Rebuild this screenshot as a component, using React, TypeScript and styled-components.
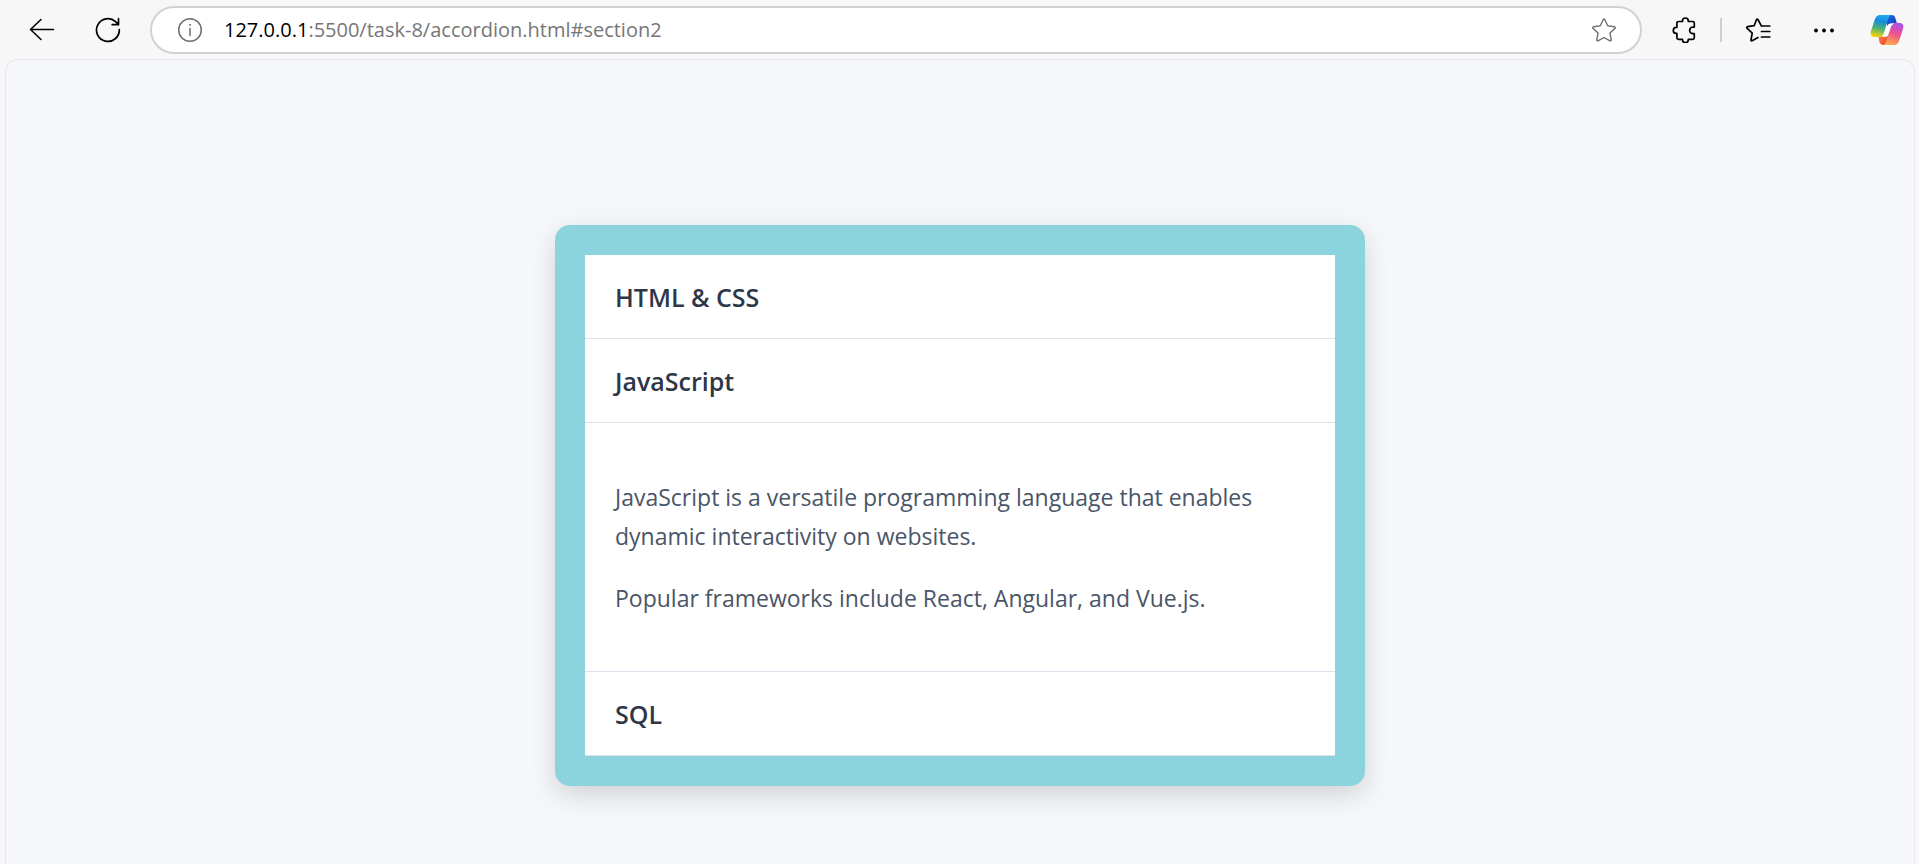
import React, { useState } from 'react';
import styled, { createGlobalStyle } from 'styled-components';

const GlobalStyle = createGlobalStyle`
  *, *::before, *::after { box-sizing: border-box; }
  body {
    margin: 0;
    background: #f7f7f7;
    font-family: 'Open Sans', 'Noto Sans', sans-serif;
  }
`;

const Window = styled.div`
  display: flex;
  flex-direction: column;
  min-height: 100vh;
`;

const Toolbar = styled.header`
  display: flex;
  align-items: center;
  padding: 6px 14px 6px 24px;
  height: 59px;
`;

const ToolButton = styled.button<{ $gap?: number }>`
  display: flex;
  align-items: center;
  justify-content: center;
  flex: none;
  width: 36px;
  height: 36px;
  padding: 0;
  margin-left: ${({ $gap = 0 }) => $gap}px;
  border: 0;
  border-radius: 6px;
  background: transparent;
  color: #000;
  cursor: pointer;
`;

const AddressBar = styled.form`
  display: flex;
  align-items: center;
  flex: 1;
  min-width: 0;
  height: 48px;
  margin-left: 24px;
  padding: 0 18px 0 20px;
  border: 2px solid #d2d2d2;
  border-radius: 24px;
  background: #fff;
  font-size: 20px;
`;

const BarButton = styled(ToolButton)`
  color: #6e6e6e;
`;

const Host = styled.label`
  margin-left: 16px;
  color: #000;
`;

const Address = styled.input`
  flex: 1;
  min-width: 0;
  padding: 0;
  border: 0;
  outline: 0;
  background: transparent;
  color: #767676;
  font: inherit;
`;

const Divider = styled.span`
  width: 2px;
  height: 24px;
  margin-left: 17px;
  background: #cfcfcf;
`;

const Viewport = styled.main`
  display: flex;
  flex: 1;
  justify-content: center;
  align-items: flex-start;
  margin: 0 4px 0 5px;
  padding: 165px 24px 0;
  border: 1px solid #e6e7e9;
  border-bottom: 0;
  border-radius: 14px 14px 0 0;
  background: #f5f7fb;
`;

const Card = styled.div`
  width: 100%;
  max-width: 810px;
  padding: 30px;
  border-radius: 15px;
  background: #8bd4dd;
  box-shadow: 0 9px 27px rgba(0, 0, 0, 0.15);
`;

const Section = styled.section`
  background: #fff;
`;

const SectionHeader = styled.a`
  display: block;
  padding: 24px 30px 23px;
  border-bottom: 1px solid #dfe2ec;
  color: #2d3748;
  font-size: 25px;
  font-weight: 600;
  line-height: 36px;
  text-decoration: none;
`;

const Panel = styled.div`
  display: flex;
  flex-direction: column;
  gap: 23px;
  padding: 55px 30px 53px;
  border-bottom: 1px solid #dfe2ec;
`;

const Paragraph = styled.p`
  margin: 0;
  color: #4a5568;
  font-size: 23px;
  line-height: 39px;
`;

const stroke = {
  fill: 'none',
  stroke: 'currentColor',
  strokeLinecap: 'round' as const,
  strokeLinejoin: 'round' as const,
};

const BackIcon = () => (
  <svg width="26" height="26" viewBox="0 0 26 26" {...stroke} strokeWidth="1.6">
    <path d="M24.5 12.5H1.5M12 2.5l-10.5 10 10.5 10" />
  </svg>
);

const ReloadIcon = () => (
  <svg width="26" height="26" viewBox="0 0 26 26" {...stroke} strokeWidth="1.7">
    <path d="M24.3 12.5A11.4 11.4 0 1 1 20.600 4.600l2.900 2.900M23.500 1.700v6h-6.300" />
  </svg>
);

const InfoIcon = () => (
  <svg width="26" height="26" viewBox="0 0 26 26" {...stroke} strokeWidth="1.5">
    <circle cx="13" cy="13" r="11.3" />
    <path d="M13 11.5v7" />
    <circle cx="13" cy="7.8" r=".6" fill="currentColor" strokeWidth=".8" />
  </svg>
);

const StarIcon = () => (
  <svg width="26" height="26" viewBox="0 0 26 26" {...stroke} strokeWidth="1.4">
    <path d="M12.3 2.500q.7-1 1.400 0l3 6.300 6.900 1q1.200.4.400 1.400l-5 4.900 1.200 6.800q0 1.200-1.200.9L13 20.500l-6 3.300q-1.200.3-1.200-.9L7 16.100l-5-4.900q-.8-1 .4-1.400l6.900-1z" />
  </svg>
);

const PuzzleIcon = () => (
  <svg width="26" height="26" viewBox="0 0 26 26" {...stroke} strokeWidth="1.7">
    <path d="M6.500 4.500h4v-.6a2.900 2.900 0 0 1 5.800 0v.6h4.400c.9 0 1.600.7 1.600 1.600v4h-1.400a2.900 2.900 0 0 0 0 6.600h1.400v4c0 .9-.7 1.600-1.600 1.600h-4.400v.4a2.900 2.900 0 0 1-5.800 0v-.4h-4c-.9 0-1.600-.7-1.600-1.600v-4.300h-.6a3 3 0 0 1 0-6h.6V6.100c0-.9.700-1.600 1.600-1.600z" />
  </svg>
);

const FavoritesIcon = () => (
  <svg width="26" height="26" viewBox="0 0 26 26" {...stroke} strokeWidth="1.7">
    <path d="M13 20.600l-5.900 3.200q-1.200.4-1.100-.8l1.200-6.900-5.200-5q-.8-1 .4-1.400l6.800-1 2.300-6.200q.7-1 1.400 0l3.300 6.200M16.500 9h8.300M16.500 14.500h8.300M16.500 20h8.300" />
  </svg>
);

const MoreIcon = () => (
  <svg width="26" height="26" viewBox="0 0 26 26" fill="currentColor">
    <circle cx="5" cy="13.5" r="1.9" />
    <circle cx="13" cy="13.5" r="1.9" />
    <circle cx="21" cy="13.5" r="1.9" />
  </svg>
);

const CopilotIcon = () => (
  <svg width="34" height="32" viewBox="0 0 34 32">
    <defs>
      <linearGradient id="cool" x1=".6" y1="0" x2=".4" y2="1">
        <stop offset="0" stopColor="#22a9f2" />
        <stop offset=".3" stopColor="#168bdc" />
        <stop offset=".62" stopColor="#4bb277" />
        <stop offset="1" stopColor="#f5d00d" />
      </linearGradient>
      <linearGradient id="navy" x1="0" y1="0" x2="1" y2="1">
        <stop offset="0" stopColor="#1769e0" />
        <stop offset="1" stopColor="#1a35b8" />
      </linearGradient>
      <linearGradient id="warm" x1=".7" y1="0" x2=".35" y2="1">
        <stop offset="0" stopColor="#a951e8" />
        <stop offset=".45" stopColor="#ec5092" />
        <stop offset="1" stopColor="#ffac4a" />
      </linearGradient>
      <linearGradient id="ember" x1="0" y1="0" x2="1" y2="1">
        <stop offset="0" stopColor="#ff8a45" />
        <stop offset="1" stopColor="#e9402d" />
      </linearGradient>
    </defs>
    <path fill="url(#navy)" d="M17 1h4.500c2.200 0 3.200 1.200 3.800 3l1.700 5.500h-5c-3 0-4 1-5 4.500z" />
    <path fill="url(#ember)" d="M8.500 22.500h4c3 0 4-1 5-4.500l2 0-3 13h-3c-2.500 0-3.500-1.500-4.200-3.500z" />
    <path fill="url(#cool)" d="M10 1h12c-2.300 0-3.200 1.800-4 4.500l-4 13c-.8 2.700-2.300 4.500-5 4.500H4.500C1 23 0 20.500 1 17L4.800 5.500C5.800 2.500 7.500 1 10 1z" />
    <path fill="url(#warm)" d="M24 31H12.500c2.300 0 3.200-1.800 4-4.500l4-13c.8-2.700 2.300-4.500 5-4.500h4c3.500 0 4.500 2.500 3.500 6l-3.800 11.500C28.200 29.500 26.500 31 24 31z" />
    <path fill="#fff" d="M21.500 9.500h3.300c-2.300.5-3.500 2-4.200 4l-2.400 7.500c-.5 1.300-1.600 1.800-3.400 1.800h-2.600c1.500-.9 2.300-2.300 2.800-4l1.900-6c.7-2.200 2-3.300 4.600-3.300z" />
  </svg>
);

const sections = [
  {
    id: 'section1',
    title: 'HTML & CSS',
    body: ['HTML gives a page its structure.', 'CSS describes how it is presented.'],
  },
  {
    id: 'section2',
    title: 'JavaScript',
    body: [
      'JavaScript is a versatile programming language that enables dynamic interactivity on websites.',
      'Popular frameworks include React, Angular, and Vue.js.',
    ],
  },
  {
    id: 'section3',
    title: 'SQL',
    body: ['SQL is used to query and manage relational databases.'],
  },
];

export default function App() {
  const [open, setOpen] = useState('section2');
  const [path, setPath] = useState(':5500/task-8/accordion.html#section2');

  return (
    <>
      <GlobalStyle />
      <Window>
        <Toolbar>
          <ToolButton aria-label="Back"><BackIcon /></ToolButton>
          <ToolButton aria-label="Refresh" $gap={30}><ReloadIcon /></ToolButton>
          <AddressBar onSubmit={(e) => e.preventDefault()}>
            <BarButton type="button" aria-label="Site information"><InfoIcon /></BarButton>
            <Host htmlFor="address">127.0.0.1</Host>
            <Address id="address" value={path} onChange={(e) => setPath(e.target.value)} />
            <BarButton type="button" aria-label="Add to favorites"><StarIcon /></BarButton>
          </AddressBar>
          <ToolButton aria-label="Extensions" $gap={25}><PuzzleIcon /></ToolButton>
          <Divider />
          <ToolButton aria-label="Favorites" $gap={18}><FavoritesIcon /></ToolButton>
          <ToolButton aria-label="Settings and more" $gap={30}><MoreIcon /></ToolButton>
          <ToolButton aria-label="Copilot" $gap={27}><CopilotIcon /></ToolButton>
        </Toolbar>
        <Viewport>
          <Card>
            {sections.map(({ id, title, body }) => (
              <Section key={id}>
                <SectionHeader
                  href={`#${id}`}
                  aria-expanded={open === id}
                  onClick={() => {
                    setOpen(id);
                    setPath(`:5500/task-8/accordion.html#${id}`);
                  }}
                >
                  {title}
                </SectionHeader>
                {open === id && (
                  <Panel id={id}>
                    {body.map((text) => (
                      <Paragraph key={text}>{text}</Paragraph>
                    ))}
                  </Panel>
                )}
              </Section>
            ))}
          </Card>
        </Viewport>
      </Window>
    </>
  );
}
